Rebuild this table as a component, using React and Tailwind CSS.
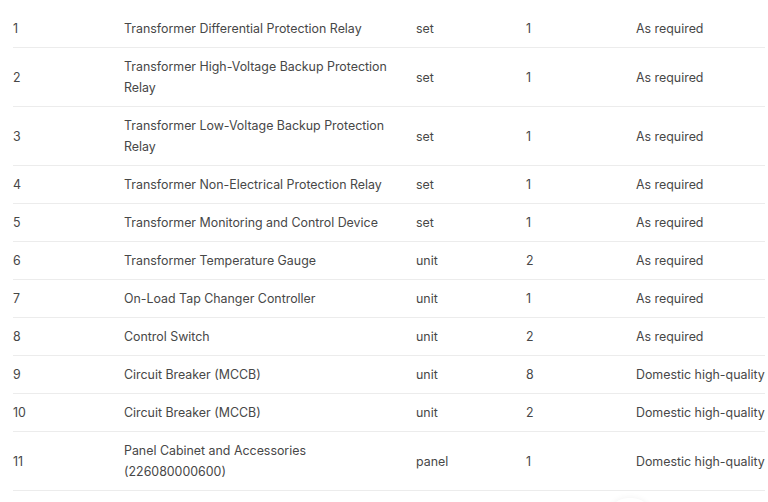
const rows = [
  ['1', 'Transformer Differential Protection Relay', 'set', '1', 'As required'],
  ['2', 'Transformer High-Voltage Backup Protection Relay', 'set', '1', 'As required'],
  ['3', 'Transformer Low-Voltage Backup Protection Relay', 'set', '1', 'As required'],
  ['4', 'Transformer Non-Electrical Protection Relay', 'set', '1', 'As required'],
  ['5', 'Transformer Monitoring and Control Device', 'set', '1', 'As required'],
  ['6', 'Transformer Temperature Gauge', 'unit', '2', 'As required'],
  ['7', 'On-Load Tap Changer Controller', 'unit', '1', 'As required'],
  ['8', 'Control Switch', 'unit', '2', 'As required'],
  ['9', 'Circuit Breaker (MCCB)', 'unit', '8', 'Domestic high-quality'],
  ['10', 'Circuit Breaker (MCCB)', 'unit', '2', 'Domestic high-quality'],
  ['11', 'Panel Cabinet and Accessories (226080000600)', 'panel', '1', 'Domestic high-quality'],
]

export default function App() {
  return (
    <div
      className="relative h-[502px] w-[768px] overflow-hidden bg-white"
      style={{ fontFamily: 'Inter, "Noto Sans", sans-serif' }}
    >
      <div className="ml-[13px] w-[752px] overflow-hidden pt-[10px]">
        <div className="w-[800px]">
          {rows.map((r) => (
            <div
              key={r[0]}
              className="grid grid-cols-[111px_292px_110px_110px_177px] items-center border-b border-[#ececec] py-2 text-[12.4px] leading-[21px] text-[#474747]"
            >
              <div>{r[0]}</div>
              <div className="pr-4">{r[1]}</div>
              <div>{r[2]}</div>
              <div>{r[3]}</div>
              <div className="whitespace-nowrap">{r[4]}</div>
            </div>
          ))}
        </div>
      </div>

      {/* floating button peeking in at the bottom */}
      <div className="absolute left-[608px] top-[498px] h-10 w-11 rounded-full bg-white shadow-[0_0_6px_rgba(0,0,0,0.06)]"></div>
    </div>
  )
}
